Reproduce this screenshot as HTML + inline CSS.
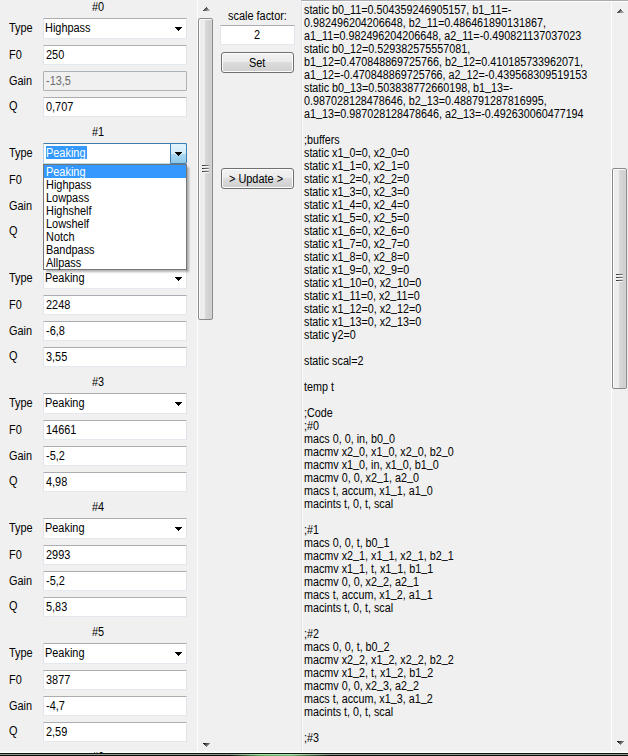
<!DOCTYPE html>
<html><head><meta charset="utf-8"><style>
html,body{margin:0;padding:0}
body{width:628px;height:756px;overflow:hidden;position:relative;background:#f0f0f0;font-family:"Liberation Sans",sans-serif;font-size:11px;color:#000}
.t{position:absolute;white-space:pre;line-height:13px;height:13px;font-size:12px;transform:scaleX(0.91);transform-origin:0 0}
.tb{position:absolute;box-sizing:border-box;background:#fff;border:1px solid;border-color:#abadb3 #e2e3ea #e3e9ef #e2e3ea;border-radius:1px}
.tbd{position:absolute;box-sizing:border-box;background:#f0f0f0;border:1px solid #adb2b5;border-radius:1px}
.cb{position:absolute;box-sizing:border-box;background:#fff;border:1px solid;border-color:#abadb3 #e2e3ea #e3e9ef #e2e3ea;border-radius:1px}
.cbf{position:absolute;box-sizing:border-box;background:#fff;border:1px solid;border-color:#3d7bad #a4c9e3 #b7d9ed #b5cfe7;border-radius:1px}
.ddb{position:absolute;box-sizing:border-box;border:1px solid #3c7fb1;border-radius:0 2px 2px 0;background:linear-gradient(#e3f3fc 0,#d3ecfa 50%,#afdbf3 50%,#8cc7e9 100%)}
.code{position:absolute;white-space:pre;line-height:13px;font-size:12px;transform:scaleX(0.897);transform-origin:0 0}
.thumb{position:absolute;box-sizing:border-box;border:1px solid #8a8a8a;border-radius:2px;background:linear-gradient(90deg,#fcfcfc 0 1px,#ededed 1px 6px,#dadada 6px,#cfcfcf 11px,#d6d6d6 13px);box-shadow:inset 0 1px 0 #fafafa}
.u{position:relative;top:-2px}
.btn{position:absolute;box-sizing:border-box;border:1px solid #707070;border-radius:3px;background:linear-gradient(#f2f2f2 0,#ebebeb 9px,#dddddd 9px,#cfcfcf 100%);box-shadow:inset 0 0 0 1px #fcfcfc}
</style></head><body>
<div class="t" style="left:92px;top:1px;">#0</div><div class="t" style="left:9px;top:22px;">Type</div><div class="t" style="left:9px;top:49px;">F0</div><div class="t" style="left:9px;top:75px;">Gain</div><div class="t" style="left:9px;top:100px;">Q</div><div class="cb" style="left:43px;top:18px;width:144px;height:21px;"></div><div class="t" style="left:45px;top:22px;">Highpass</div><svg width="7" height="4" shape-rendering="crispEdges" style="position:absolute;left:175px;top:27px;display:block"><path d="M0 0h7v1H0zM1 1h5v1H1zM2 2h3v1H2zM3 3h1v1H3z" fill="#000"/></svg><div class="tb" style="left:43px;top:45px;width:144px;height:20px;"></div><div class="t" style="left:46px;top:49px;">250</div><div class="tbd" style="left:43px;top:71px;width:144px;height:20px;"></div><div class="t" style="left:46px;top:75px;color:#6d6d6d">-13,5</div><div class="tb" style="left:43px;top:97px;width:144px;height:20px;"></div><div class="t" style="left:46px;top:101px;">0,707</div><div class="t" style="left:92px;top:126px;">#1</div><div class="t" style="left:9px;top:147px;">Type</div><div class="t" style="left:9px;top:174px;">F0</div><div class="t" style="left:9px;top:200px;">Gain</div><div class="t" style="left:9px;top:225px;">Q</div><div class="t" style="left:92px;top:251px;">#2</div><div class="t" style="left:9px;top:272px;">Type</div><div class="t" style="left:9px;top:299px;">F0</div><div class="t" style="left:9px;top:325px;">Gain</div><div class="t" style="left:9px;top:350px;">Q</div><div class="cb" style="left:43px;top:268px;width:144px;height:21px;"></div><div class="t" style="left:45px;top:272px;">Peaking</div><svg width="7" height="4" shape-rendering="crispEdges" style="position:absolute;left:175px;top:277px;display:block"><path d="M0 0h7v1H0zM1 1h5v1H1zM2 2h3v1H2zM3 3h1v1H3z" fill="#000"/></svg><div class="tb" style="left:43px;top:295px;width:144px;height:20px;"></div><div class="t" style="left:46px;top:299px;">2248</div><div class="tb" style="left:43px;top:321px;width:144px;height:20px;"></div><div class="t" style="left:46px;top:325px;">-6,8</div><div class="tb" style="left:43px;top:347px;width:144px;height:20px;"></div><div class="t" style="left:46px;top:351px;">3,55</div><div class="t" style="left:92px;top:376px;">#3</div><div class="t" style="left:9px;top:397px;">Type</div><div class="t" style="left:9px;top:424px;">F0</div><div class="t" style="left:9px;top:450px;">Gain</div><div class="t" style="left:9px;top:475px;">Q</div><div class="cb" style="left:43px;top:393px;width:144px;height:21px;"></div><div class="t" style="left:45px;top:397px;">Peaking</div><svg width="7" height="4" shape-rendering="crispEdges" style="position:absolute;left:175px;top:402px;display:block"><path d="M0 0h7v1H0zM1 1h5v1H1zM2 2h3v1H2zM3 3h1v1H3z" fill="#000"/></svg><div class="tb" style="left:43px;top:420px;width:144px;height:20px;"></div><div class="t" style="left:46px;top:424px;">14661</div><div class="tb" style="left:43px;top:446px;width:144px;height:20px;"></div><div class="t" style="left:46px;top:450px;">-5,2</div><div class="tb" style="left:43px;top:472px;width:144px;height:20px;"></div><div class="t" style="left:46px;top:476px;">4,98</div><div class="t" style="left:92px;top:501px;">#4</div><div class="t" style="left:9px;top:522px;">Type</div><div class="t" style="left:9px;top:549px;">F0</div><div class="t" style="left:9px;top:575px;">Gain</div><div class="t" style="left:9px;top:600px;">Q</div><div class="cb" style="left:43px;top:518px;width:144px;height:21px;"></div><div class="t" style="left:45px;top:522px;">Peaking</div><svg width="7" height="4" shape-rendering="crispEdges" style="position:absolute;left:175px;top:527px;display:block"><path d="M0 0h7v1H0zM1 1h5v1H1zM2 2h3v1H2zM3 3h1v1H3z" fill="#000"/></svg><div class="tb" style="left:43px;top:545px;width:144px;height:20px;"></div><div class="t" style="left:46px;top:549px;">2993</div><div class="tb" style="left:43px;top:571px;width:144px;height:20px;"></div><div class="t" style="left:46px;top:575px;">-5,2</div><div class="tb" style="left:43px;top:597px;width:144px;height:20px;"></div><div class="t" style="left:46px;top:601px;">5,83</div><div class="t" style="left:92px;top:626px;">#5</div><div class="t" style="left:9px;top:647px;">Type</div><div class="t" style="left:9px;top:674px;">F0</div><div class="t" style="left:9px;top:700px;">Gain</div><div class="t" style="left:9px;top:725px;">Q</div><div class="cb" style="left:43px;top:643px;width:144px;height:21px;"></div><div class="t" style="left:45px;top:647px;">Peaking</div><svg width="7" height="4" shape-rendering="crispEdges" style="position:absolute;left:175px;top:652px;display:block"><path d="M0 0h7v1H0zM1 1h5v1H1zM2 2h3v1H2zM3 3h1v1H3z" fill="#000"/></svg><div class="tb" style="left:43px;top:670px;width:144px;height:20px;"></div><div class="t" style="left:46px;top:674px;">3877</div><div class="tb" style="left:43px;top:696px;width:144px;height:20px;"></div><div class="t" style="left:46px;top:700px;">-4,7</div><div class="tb" style="left:43px;top:722px;width:144px;height:20px;"></div><div class="t" style="left:46px;top:726px;">2,59</div><div class="cbf" style="left:43px;top:143px;width:144px;height:21px;"></div><div style="position:absolute;left:46px;top:146px;width:41px;height:13px;background:#3399ff"></div><div class="t" style="left:46px;top:147px;color:#fff">Peaking</div><div class="ddb" style="left:170px;top:143px;width:17px;height:21px;"></div><svg width="7" height="4" shape-rendering="crispEdges" style="position:absolute;left:175px;top:152px;display:block"><path d="M0 0h7v1H0zM1 1h5v1H1zM2 2h3v1H2zM3 3h1v1H3z" fill="#000"/></svg><div style="position:absolute;left:43px;top:164px;width:142px;height:104px;border:1px solid #767676;background:#fff;box-shadow:2px 2px 2px -0.5px rgba(0,0,0,0.3)"></div><div style="position:absolute;left:44px;top:165px;width:142px;height:13px;background:#3399ff"></div><div class="t" style="left:46px;top:166px;color:#fff">Peaking</div><div class="t" style="left:46px;top:179px;">Highpass</div><div class="t" style="left:46px;top:192px;">Lowpass</div><div class="t" style="left:46px;top:205px;">Highshelf</div><div class="t" style="left:46px;top:218px;">Lowshelf</div><div class="t" style="left:46px;top:231px;">Notch</div><div class="t" style="left:46px;top:244px;">Bandpass</div><div class="t" style="left:46px;top:257px;">Allpass</div><div style="position:absolute;left:197px;top:0px;width:17px;height:752px;background:#f0f0f0"></div><div style="position:absolute;left:197px;top:0px;width:1px;height:752px;background:#fdfdfd"></div><div style="position:absolute;left:198px;top:0px;width:1px;height:752px;background:repeating-linear-gradient(#f6f6f6 0 1px,#ebebeb 1px 2px)"></div><svg width="9" height="6" shape-rendering="crispEdges" style="position:absolute;left:202px;top:6px;display:block"><defs><linearGradient id="g203_7" x1="0" y1="0" x2="1" y2="0.6"><stop offset="0.15" stop-color="#141414"/><stop offset="1" stop-color="#b4b4b4"/></linearGradient></defs><g transform="translate(1,1)"><path d="M3 0h1v1H3zM2 1h3v1H2zM1 2h5v1H1zM0 3h7v1H0z" fill="url(#g203_7)"/></g></svg><svg width="9" height="6" shape-rendering="crispEdges" style="position:absolute;left:202px;top:742px;display:block"><defs><linearGradient id="g203_743" x1="0" y1="0" x2="1" y2="0.6"><stop offset="0.15" stop-color="#141414"/><stop offset="1" stop-color="#b4b4b4"/></linearGradient></defs><g transform="translate(1,1)"><path d="M0 0h7v1H0zM1 1h5v1H1zM2 2h3v1H2zM3 3h1v1H3z" fill="url(#g203_743)"/></g></svg><div class="thumb" style="left:198px;top:18px;width:15px;height:302px"></div><div style="position:absolute;left:202px;top:165px;width:7px;height:1px;background:linear-gradient(90deg,#303030,#8a8a8a);box-shadow:0 1px 0 #f6f6f6"></div><div style="position:absolute;left:202px;top:168px;width:7px;height:1px;background:linear-gradient(90deg,#303030,#8a8a8a);box-shadow:0 1px 0 #f6f6f6"></div><div style="position:absolute;left:202px;top:171px;width:7px;height:1px;background:linear-gradient(90deg,#303030,#8a8a8a);box-shadow:0 1px 0 #f6f6f6"></div><div class="t" style="left:228px;top:10px;">scale factor:</div><div class="tb" style="left:220px;top:25px;width:75px;height:20px;"></div><div class="t" style="left:254px;top:29px;">2</div><div class="btn" style="left:221px;top:52px;width:73px;height:21px;"></div><div class="t" style="left:249px;top:57px;">Set</div><div class="btn" style="left:221px;top:168px;width:73px;height:21px;"></div><div class="t" style="left:229px;top:173px;">&gt; Update &gt;</div><div style="position:absolute;left:301px;top:0px;width:340px;height:752px;box-sizing:border-box;border:1px solid;border-color:#abadb3 #e2e3ea #e3e9ef #e2e3ea;background:#f0f0f0"></div><div style="position:absolute;left:302px;top:1px;width:1px;height:750px;background:#fbfbfb"></div><div class="code" style="left:304px;top:4px">static b0<span class="u">_</span>11=0.504359246905157, b1<span class="u">_</span>11=-
0.982496204206648, b2<span class="u">_</span>11=0.486461890131867,
a1<span class="u">_</span>11=0.982496204206648, a2<span class="u">_</span>11=-0.490821137037023
static b0<span class="u">_</span>12=0.529382575557081,
b1<span class="u">_</span>12=0.470848869725766, b2<span class="u">_</span>12=0.410185733962071,
a1<span class="u">_</span>12=-0.470848869725766, a2<span class="u">_</span>12=-0.439568309519153
static b0<span class="u">_</span>13=0.503838772660198, b1<span class="u">_</span>13=-
0.987028128478646, b2<span class="u">_</span>13=0.488791287816995,
a1<span class="u">_</span>13=0.987028128478646, a2<span class="u">_</span>13=-0.492630060477194

;buffers
static x1<span class="u">_</span>0=0, x2<span class="u">_</span>0=0
static x1<span class="u">_</span>1=0, x2<span class="u">_</span>1=0
static x1<span class="u">_</span>2=0, x2<span class="u">_</span>2=0
static x1<span class="u">_</span>3=0, x2<span class="u">_</span>3=0
static x1<span class="u">_</span>4=0, x2<span class="u">_</span>4=0
static x1<span class="u">_</span>5=0, x2<span class="u">_</span>5=0
static x1<span class="u">_</span>6=0, x2<span class="u">_</span>6=0
static x1<span class="u">_</span>7=0, x2<span class="u">_</span>7=0
static x1<span class="u">_</span>8=0, x2<span class="u">_</span>8=0
static x1<span class="u">_</span>9=0, x2<span class="u">_</span>9=0
static x1<span class="u">_</span>10=0, x2<span class="u">_</span>10=0
static x1<span class="u">_</span>11=0, x2<span class="u">_</span>11=0
static x1<span class="u">_</span>12=0, x2<span class="u">_</span>12=0
static x1<span class="u">_</span>13=0, x2<span class="u">_</span>13=0
static y2=0

static scal=2

temp t

;Code
;#0
macs 0, 0, in, b0<span class="u">_</span>0
macmv x2<span class="u">_</span>0, x1<span class="u">_</span>0, x2<span class="u">_</span>0, b2<span class="u">_</span>0
macmv x1<span class="u">_</span>0, in, x1<span class="u">_</span>0, b1<span class="u">_</span>0
macmv 0, 0, x2<span class="u">_</span>1, a2<span class="u">_</span>0
macs t, accum, x1<span class="u">_</span>1, a1<span class="u">_</span>0
macints t, 0, t, scal

;#1
macs 0, 0, t, b0<span class="u">_</span>1
macmv x2<span class="u">_</span>1, x1<span class="u">_</span>1, x2<span class="u">_</span>1, b2<span class="u">_</span>1
macmv x1<span class="u">_</span>1, t, x1<span class="u">_</span>1, b1<span class="u">_</span>1
macmv 0, 0, x2<span class="u">_</span>2, a2<span class="u">_</span>1
macs t, accum, x1<span class="u">_</span>2, a1<span class="u">_</span>1
macints t, 0, t, scal

;#2
macs 0, 0, t, b0<span class="u">_</span>2
macmv x2<span class="u">_</span>2, x1<span class="u">_</span>2, x2<span class="u">_</span>2, b2<span class="u">_</span>2
macmv x1<span class="u">_</span>2, t, x1<span class="u">_</span>2, b1<span class="u">_</span>2
macmv 0, 0, x2<span class="u">_</span>3, a2<span class="u">_</span>2
macs t, accum, x1<span class="u">_</span>3, a1<span class="u">_</span>2
macints t, 0, t, scal

;#3</div><div style="position:absolute;left:611px;top:1px;width:17px;height:751px;background:#f0f0f0"></div><div style="position:absolute;left:611px;top:1px;width:1px;height:751px;background:#fdfdfd"></div><div style="position:absolute;left:612px;top:1px;width:1px;height:751px;background:repeating-linear-gradient(#f6f6f6 0 1px,#ebebeb 1px 2px)"></div><svg width="9" height="6" shape-rendering="crispEdges" style="position:absolute;left:616px;top:8px;display:block"><defs><linearGradient id="g617_9" x1="0" y1="0" x2="1" y2="0.6"><stop offset="0.15" stop-color="#141414"/><stop offset="1" stop-color="#b4b4b4"/></linearGradient></defs><g transform="translate(1,1)"><path d="M3 0h1v1H3zM2 1h3v1H2zM1 2h5v1H1zM0 3h7v1H0z" fill="url(#g617_9)"/></g></svg><svg width="9" height="6" shape-rendering="crispEdges" style="position:absolute;left:616px;top:740px;display:block"><defs><linearGradient id="g617_741" x1="0" y1="0" x2="1" y2="0.6"><stop offset="0.15" stop-color="#141414"/><stop offset="1" stop-color="#b4b4b4"/></linearGradient></defs><g transform="translate(1,1)"><path d="M0 0h7v1H0zM1 1h5v1H1zM2 2h3v1H2zM3 3h1v1H3z" fill="url(#g617_741)"/></g></svg><div class="thumb" style="left:612px;top:168px;width:15px;height:221px"></div><div style="position:absolute;left:616px;top:274px;width:7px;height:1px;background:linear-gradient(90deg,#303030,#8a8a8a);box-shadow:0 1px 0 #f6f6f6"></div><div style="position:absolute;left:616px;top:277px;width:7px;height:1px;background:linear-gradient(90deg,#303030,#8a8a8a);box-shadow:0 1px 0 #f6f6f6"></div><div style="position:absolute;left:616px;top:280px;width:7px;height:1px;background:linear-gradient(90deg,#303030,#8a8a8a);box-shadow:0 1px 0 #f6f6f6"></div><div style="position:absolute;left:302px;top:1px;width:326px;height:1px;background:#fcfcfc"></div><div style="position:absolute;left:0;top:751px;width:628px;height:1px;background:#f7f7f7"></div><div style="position:absolute;left:0;top:752px;width:628px;height:1px;background:#ffffff"></div><div class="t" style="left:92px;top:751px;">#6</div><div style="position:absolute;left:0;top:753px;width:628px;height:1px;background:#0c160c"></div><div style="position:absolute;left:0;top:754px;width:628px;height:1px;background:linear-gradient(90deg,#8e988e 0,#8e988e 230px,#a8dca8 260px,#b0e0b0 290px,#8e988e 330px,#8e988e 100%)"></div><div style="position:absolute;left:0;top:755px;width:628px;height:1px;background:linear-gradient(90deg,#071007 0,#071007 230px,#5ea85e 260px,#6cb86c 290px,#0a140a 330px,#071007 100%)"></div>
</body></html>
